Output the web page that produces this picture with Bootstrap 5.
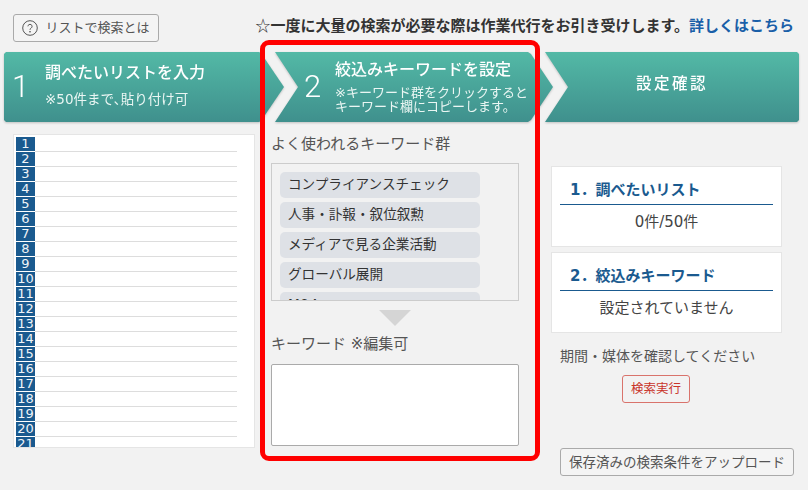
<!DOCTYPE html>
<html lang="ja">
<head>
<meta charset="utf-8">
<link href="https://cdn.jsdelivr.net/npm/bootstrap@5.3.0/dist/css/bootstrap.min.css" rel="stylesheet">
<style>
html,body{height:490px;overflow:hidden}
body{background:#f2f2f2;color:#444;font-family:"DejaVu Sans","Noto Sans CJK JP",sans-serif;font-size:14px;position:relative}
.page-wrap{padding:14px 14px 0 4px}
.top-row{height:28px;margin-left:9px;margin-bottom:10px}
.help-btn{width:146px;height:28px;border:1px solid #aaa;border-radius:3px;background:#f4f4f4;color:#555;font-size:13px;padding:0;display:flex;align-items:center;justify-content:center;gap:7px}
.notice{font-size:15px;line-height:22px;font-weight:700;color:#333;white-space:nowrap}
.notice a{color:#1a5fa8;text-decoration:none}
.star-mark{font-family:"Noto Sans CJK JP",sans-serif;font-weight:400}
.steps{filter:drop-shadow(0 1px 1px rgba(0,0,0,.2));height:70px}
.step{height:70px;background:linear-gradient(#53b9a6,#3f908d);color:#fff;position:relative;flex:none}
.step-a{width:280px;clip-path:polygon(2px 0,255px 0,257px 1px,280px 35px,257px 69px,255px 100%,2px 100%,0 68px,0 2px)}
.step-b{width:278px;margin-left:-9px;clip-path:polygon(0 0,253px 0,256px 2px,278px 35px,256px 68px,253px 100%,0 100%,23px 35px)}
.step-c{width:254px;margin-left:-8px;clip-path:polygon(0 0,252px 0,100% 2px,100% 68px,252px 100%,0 100%,23px 35px)}
.step-num{font-family:Roboto,sans-serif;font-size:31px;font-weight:300;line-height:1;position:absolute}
.step-a .step-num{left:8px;top:19px}
.step-b .step-num{left:29px;top:19px}
.step-title{font-size:16px;line-height:20px;font-weight:500;position:absolute;white-space:nowrap}
.step-a .step-title{left:41px;top:11px}
.step-b .step-title{left:60px;top:8px}
.step-sub{font-size:13px;line-height:14px;position:absolute;white-space:nowrap;color:#eaf6f3}
.step-a .step-sub{left:41px;top:40px;font-size:13.5px}
.step-b .step-sub{left:60px;top:34px}
.step-c .step-title{left:91px;top:22px;font-size:15.5px;letter-spacing:2.5px}
.cols{margin-left:9px}
.list-col{width:242px;height:314px;margin-top:12px;background:#fff;border:1px solid #e5e5e5;overflow:hidden;padding-top:2px;padding-left:2px;flex:none}
.list-line{height:15px;display:flex;width:221px}
.list-no{width:19px;height:14px;background:#1a5a8f;color:#f0f4f8;font-size:13px;line-height:14px;text-align:center;flex:none}
.list-fill{flex:1;border-bottom:1px solid #ddd}
.mid-col{width:248px;margin-left:16px;flex:none}
.mid-label{font-size:15px;line-height:20px;color:#555}
.kw-box{height:138px;border:1px solid #ccc;overflow:hidden;padding:8px;margin-top:9px}
.kw-chip{width:200px;height:26px;background:#dee1e6;border-radius:5px;font-size:13.6px;line-height:24px;padding-left:8px;margin-bottom:4px;color:#333;white-space:nowrap}
.tri{width:0;height:0;border-left:16px solid transparent;border-right:16px solid transparent;border-top:16px solid #d5d5d5;margin:9px auto 8px}
.kw-area{display:block;width:248px;height:82px;border:1px solid #aaa;border-radius:2px;background:#fff;margin-top:10px;resize:none;outline:none}
.right-col{width:231px;margin-left:32px;flex:none;padding-top:44px}
.sum-card{height:81px;background:#fff;border:1px solid #e5e5e5;margin-bottom:5px;padding:0 8px;text-align:center}
.sum-title{font-size:15px;font-weight:700;color:#1a5a8f;height:38px;line-height:46px;border-bottom:1px solid #1a5a8f;text-align:left;padding-left:10px;white-space:nowrap}
.sum-text{font-size:15px;line-height:20px;margin-top:7px;color:#444}
.period{font-size:14px;line-height:20px;margin:13px 0 9px 9px;white-space:nowrap;color:#555}
.run-btn{display:block;width:68px;height:28px;border:1px solid #d9736c;border-radius:3px;background:transparent;color:#c9342a;font-size:12.5px;padding:0;margin-left:71px}
.upload-btn{position:absolute;left:560px;top:448px;width:234px;height:28px;border:1px solid #aaa;border-radius:3px;background:#f4f4f4;color:#555;font-size:13.5px;padding:0;white-space:nowrap}
.focus-frame{position:absolute;left:260px;top:40px;width:280px;height:421px;border:5px solid #f00;border-radius:9px;pointer-events:none}
</style>
</head>
<body>
<div class="page-wrap">
  <div class="top-row d-flex justify-content-between align-items-start">
    <button type="button" class="help-btn">
      <svg width="16" height="16" viewBox="0 0 16 16" fill="none" stroke="#555"><circle cx="8" cy="8" r="7.3"/><path d="M5.9 6.3a2.1 2 0 1 1 3.3 1.7c-.8.5-1.2.9-1.2 1.8"/><circle cx="8" cy="11.8" r=".4" fill="#555"/></svg>
      <span>リストで検索とは</span>
    </button>
    <div class="notice"><span class="star-mark">☆</span>一度に大量の検索が必要な際は作業代行をお引き受けします。<a href="#">詳しくはこちら</a></div>
  </div>
  <div class="steps d-flex">
    <div class="step step-a"><span class="step-num">1</span><div class="step-title">調べたいリストを入力</div><div class="step-sub">※50件まで､貼り付け可</div></div>
    <div class="step step-b"><span class="step-num">2</span><div class="step-title">絞込みキーワードを設定</div><div class="step-sub">※キーワード群をクリックすると<br>キーワード欄にコピーします。</div></div>
    <div class="step step-c"><div class="step-title">設定確認</div></div>
  </div>
  <div class="cols d-flex">
    <div class="list-col" id="listCol"></div>
    <div class="mid-col">
      <div class="mid-label mt-2 pt-1">よく使われるキーワード群</div>
      <div class="kw-box">
        <div class="kw-chip">コンプライアンスチェック</div>
        <div class="kw-chip">人事・訃報・叙位叙勲</div>
        <div class="kw-chip">メディアで見る企業活動</div>
        <div class="kw-chip">グローバル展開</div>
        <div class="kw-chip">M&amp;A</div>
      </div>
      <div class="tri"></div>
      <div class="mid-label">キーワード ※編集可</div>
      <textarea class="kw-area" aria-label="キーワード"></textarea>
    </div>
    <div class="right-col">
      <div class="sum-card"><div class="sum-title">1．調べたいリスト</div><div class="sum-text">0件/50件</div></div>
      <div class="sum-card"><div class="sum-title">2．絞込みキーワード</div><div class="sum-text">設定されていません</div></div>
      <div class="period">期間・媒体を確認してください</div>
      <button type="button" class="run-btn">検索実行</button>
    </div>
  </div>
</div>
<button type="button" class="upload-btn">保存済みの検索条件をアップロード</button>
<div class="focus-frame"></div>
<script>
var h='';for(var i=1;i<=22;i++){h+='<div class="list-line"><div class="list-no">'+i+'</div><div class="list-fill"></div></div>';}
document.getElementById('listCol').innerHTML=h;
</script>
<script src="https://cdn.jsdelivr.net/npm/bootstrap@5.3.0/dist/js/bootstrap.bundle.min.js"></script>
</body>
</html>
